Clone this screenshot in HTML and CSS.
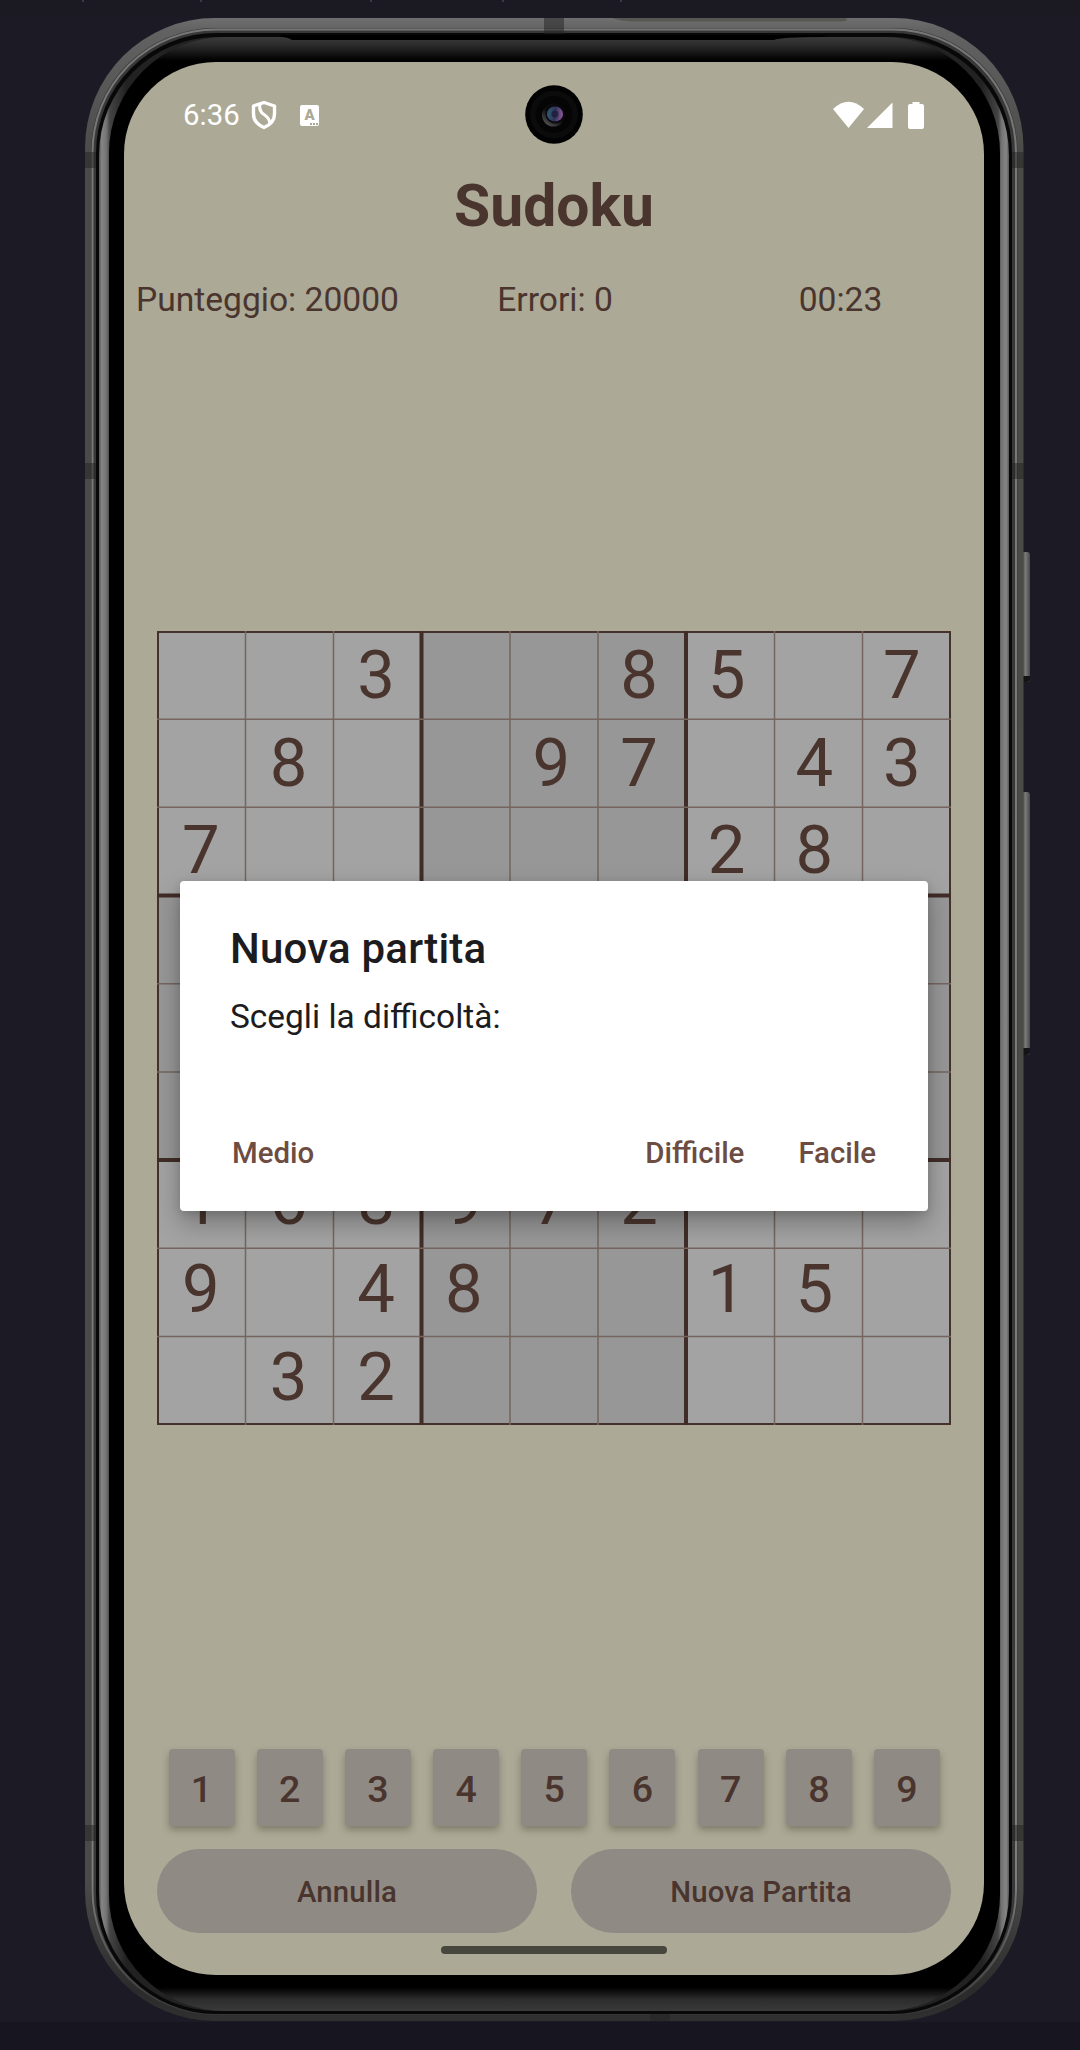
FILE: index.html
```html
<!DOCTYPE html>
<html lang="it">
<head>
<meta charset="utf-8">
<title>Sudoku</title>
<link rel="stylesheet" href="styles.css">
</head>
<body>
<svg class="device" width="1080" height="2050" viewBox="0 0 1080 2050">
  <defs>
    <linearGradient id="rim" gradientUnits="userSpaceOnUse" x1="0" y1="18" x2="0" y2="2021">
      <stop offset="0" stop-color="#6f6f6f"/><stop offset=".006" stop-color="#626262"/>
      <stop offset=".07" stop-color="#4a4b49"/><stop offset=".93" stop-color="#4a4b49"/>
      <stop offset=".985" stop-color="#2b2b2b"/><stop offset="1" stop-color="#303030"/>
    </linearGradient>
    <linearGradient id="line" gradientUnits="userSpaceOnUse" x1="0" y1="18" x2="0" y2="2021">
      <stop offset="0" stop-color="#777"/><stop offset=".93" stop-color="#7d7d7d"/><stop offset="1" stop-color="#333"/>
    </linearGradient>
    <linearGradient id="side" gradientUnits="userSpaceOnUse" x1="99" y1="0" x2="1009" y2="0">
      <stop offset="0" stop-color="#555"/><stop offset=".003" stop-color="#858585"/><stop offset=".008" stop-color="#747474"/><stop offset=".012" stop-color="#444"/><stop offset=".03" stop-color="#222"/>
      <stop offset=".97" stop-color="#222"/><stop offset=".988" stop-color="#444"/><stop offset=".992" stop-color="#747474"/><stop offset=".997" stop-color="#858585"/><stop offset="1" stop-color="#555"/>
    </linearGradient>
    <linearGradient id="bezel" gradientUnits="userSpaceOnUse" x1="0" y1="37" x2="0" y2="2011">
      <stop offset="0" stop-color="#3a3a3a"/><stop offset=".004" stop-color="#2c2c2c"/><stop offset=".012" stop-color="#000"/>
      <stop offset=".988" stop-color="#000"/><stop offset=".994" stop-color="#2c2c2c"/><stop offset="1" stop-color="#3a3a3a"/>
    </linearGradient>
    <linearGradient id="key" x1="0" y1="0" x2="1" y2="0">
      <stop offset="0" stop-color="#333"/><stop offset=".5" stop-color="#7a7a7a"/><stop offset="1" stop-color="#484848"/>
    </linearGradient>
  </defs>
  <rect width="1080" height="17" fill="#1b1a23"/>
  <rect y="2022" width="1080" height="28" fill="#171620"/>
  <path d="M83 0v2M201 0v2M371 0v2M503 0v2M621 0v2" stroke="#3a3852" stroke-width="2"/>
  <rect x="1021" y="552" width="9" height="130" rx="3" fill="url(#key)"/>
  <rect x="1021" y="792" width="9" height="263" rx="3" fill="url(#key)"/>
  <path d="M1023 676h7v3q0 3-4 3h-3zM1023 1048h7v3q0 4-4 4h-3z" fill="#141414"/>
  <rect x="85" y="18" width="938.5" height="2003" rx="130" fill="url(#rim)"/>
  <rect x="91" y="28" width="926.5" height="1987" rx="124" fill="#383838"/>
  <rect x="92.5" y="29.5" width="923.5" height="1984" rx="123" fill="none" stroke="url(#line)" stroke-width="2"/>
  <rect x="96" y="33" width="916" height="1981" rx="120" fill="#080808"/>
  <path d="M85 152h11v16H85zM1012 152h12v16h-12zM85 1825h11v16H85zM1012 1825h12v16h-12zM85 463h11v16H85zM1012 463h12v16h-12zM544 18h20v16h-20zM650 2014h20v7h-20z" fill="#222" opacity=".5"/>
  <path d="M612 18H845Q852 21 840 21.500H632Q620 21 612 18z" fill="#565653"/>
  <rect x="99" y="37" width="910" height="1974" rx="118" fill="url(#side)"/>
  <rect x="109" y="37" width="891" height="1974" rx="116" fill="url(#bezel)"/>
  <path d="M280 35H830L822 37Q780 37 774 40H292Q288 37 280 37z" fill="#000"/>
</svg>

<main class="screen">
  <header class="status">
    <span class="clock">6:36</span>
    <svg class="shield" width="26" height="30" viewBox="0 0 26 30" fill="none" stroke="#fff" stroke-width="3.400" stroke-linejoin="round">
      <path d="M13 2.500 23.500 6V14Q23.500 23 13 27.500 2.500 23 2.500 14V6z"/>
      <path d="M9 4Q7.500 11 13 14.500t6 9" stroke-width="3"/>
    </svg>
    <span class="badge"><b>A</b><i></i></span>
    <svg class="signals" width="92" height="28" viewBox="0 0 92 28" fill="#fff">
      <path d="M0 8Q15.500-6.500 31 8L15.500 27z"/><path d="M34 27 59.500 1.500V27z"/>
      <path d="M79.500 1h7v2H89q2 0 2 2v21q0 2-2 2H77q-2 0-2-2V5q0-2 2-2h2.500z"/>
    </svg>
    <svg class="camera" width="58" height="59" viewBox="0 0 58 59">
      <defs>
        <linearGradient id="lens" x1="0" y1=".4" x2="1" y2=".5"><stop offset="0" stop-color="#2d6075"/><stop offset=".5" stop-color="#2f3157"/><stop offset="1" stop-color="#8f5a9c"/></linearGradient>
        <linearGradient id="glint" x1="0" y1="1" x2=".6" y2=".2"><stop offset="0" stop-color="#666"/><stop offset=".7" stop-color="#0b0b0b"/></linearGradient>
      </defs>
      <ellipse cx="29" cy="29.500" rx="28.800" ry="29.300" fill="#020202"/>
      <circle cx="29" cy="29.500" r="24" fill="#0b0b0b"/><circle cx="29" cy="29.500" r="18.500" fill="#050505"/>
      <circle cx="28.500" cy="30" r="11.500" fill="url(#glint)"/><circle cx="30" cy="29" r="9.500" fill="#0a0a10"/>
      <ellipse cx="30" cy="29" rx="8" ry="7.500" fill="url(#lens)"/><circle cx="30" cy="29" r="3.500" fill="#1c1830" opacity=".7"/>
    </svg>
  </header>
  <h1 class="title">Sudoku</h1>
  <div class="stats"><span>Punteggio: 20000</span><span>Errori: 0</span><span>00:23</span></div>

  <section class="board">
    <svg class="rules" width="794" height="794" viewBox="0 0 794 794" fill="none">
      <path d="M0 0H794V794H0z" fill="#a3a3a3"/>
      <path d="M264.500 0H529V264.500H264.500zM0 264.500H264.500V529H0zM529 264.500H794V529H529zM264.500 529H529V794H264.500z" fill="#979797"/>
      <path d="M1 1H793V793H1z" stroke="#45322c" stroke-width="2"/>
      <path d="M264.500 0V794M529 0V794M0 264.500H794M0 529H794" stroke="#412d27" stroke-width="4"/>
      <path d="M88.500 0V794M176.500 0V794M353 0V794M441 0V794M617.500 0V794M705.500 0V794M0 88.300H794M0 176.300H794M0 352.700H794M0 441H794M0 617.300H794M0 705.500H794" stroke="#75655e" stroke-width="1.500"/>
    </svg>
    <div class="cells">
      <i></i><i></i><i>3</i><i></i><i></i><i>8</i><i>5</i><i></i><i>7</i>
      <i></i><i>8</i><i></i><i></i><i>9</i><i>7</i><i></i><i>4</i><i>3</i>
      <i>7</i><i></i><i></i><i></i><i></i><i></i><i>2</i><i>8</i><i></i>
      <i></i><i></i><i></i><i></i><i></i><i></i><i></i><i></i><i></i>
      <i></i><i></i><i></i><i></i><i></i><i></i><i></i><i></i><i></i>
      <i></i><i></i><i></i><i></i><i></i><i></i><i></i><i></i><i></i>
      <i>1</i><i>6</i><i>8</i><i>9</i><i>7</i><i>2</i><i></i><i></i><i></i>
      <i>9</i><i></i><i>4</i><i>8</i><i></i><i></i><i>1</i><i>5</i><i></i>
      <i></i><i>3</i><i>2</i><i></i><i></i><i></i><i></i><i></i><i></i>
    </div>
  </section>

  <nav class="keys"><b>1</b><b>2</b><b>3</b><b>4</b><b>5</b><b>6</b><b>7</b><b>8</b><b>9</b></nav>
  <div class="actions"><button>Annulla</button><button>Nuova Partita</button></div>
  <div class="home"></div>

  <section class="dialog">
    <h2>Nuova partita</h2>
    <p>Scegli la difficoltà:</p>
    <div class="choices"><span>Medio</span><span>Difficile</span><span>Facile</span></div>
  </section>
</main>
</body>
</html>
```
FILE: styles.css
```css
* { box-sizing: border-box; }
body {
  margin: 0;
  width: 1080px;
  height: 2050px;
  overflow: hidden;
  position: relative;
  background: #1c1b25;
  font-family: Roboto, sans-serif;
  color: #4a352e;
}
.device { position: absolute; left: 0; top: 0; }
.screen {
  position: relative;
  width: 860px;
  height: 1913px;
  margin: 62px 0 0 124px;
  border-radius: 92px;
  background: #aca996;
  display: flex;
  flex-direction: column;
}
.status {
  position: relative;
  height: 105px;
  padding-left: 59px;
  display: flex;
  align-items: center;
  color: #fff;
}
.clock { font-size: 29.4px; line-height: 34px; width: 68px; }
.shield { margin-top: 1px; }
.badge {
  width: 19px;
  height: 21px;
  margin-left: 23px;
  margin-top: 1px;
  border-radius: 2px;
  background: #fff;
  color: #aca996;
  position: relative;
  text-align: center;
}
.badge b { display: block; font-size: 15px; line-height: 20px; font-weight: 900; }
.badge i {
  position: absolute;
  right: 1px;
  bottom: 1px;
  width: 8px;
  height: 2px;
  background: repeating-linear-gradient(90deg, #aca996 0 2px, #fff 2px 3px);
}
.signals { margin-left: auto; margin-right: 59px; }
.camera { position: absolute; left: 401px; top: 23px; }
.title {
  margin: 3px 0 0;
  font-size: 58.8px;
  line-height: 71px;
  font-weight: 700;
  text-align: center;
}
.stats {
  margin-top: 39px;
  padding: 0 12px;
  height: 40px;
  display: grid;
  grid-template-columns: 262px 322px 1fr;
  font-size: 33.6px;
  line-height: 40px;
  white-space: nowrap;
}
.stats span:nth-child(2) { text-align: center; padding-right: 8px; }
.stats span:nth-child(3) { text-align: center; padding-right: 11px; }
.board {
  display: grid;
  width: 794px;
  height: 794px;
  margin: 311px 0 0 33px;
}
.rules, .cells { grid-area: 1 / 1; }
.cells {
  display: grid;
  grid-template: repeat(9, 87.7px) / repeat(9, 87.65px);
}
.cells i {
  font-style: normal;
  font-size: 67px;
  line-height: 88px;
  text-align: center;
}
.keys {
  margin: 324px 0 0 44.5px;
  display: flex;
  gap: 22.2px;
}
.keys b {
  width: 66px;
  height: 77px;
  border-radius: 4px;
  background: #908a85;
  box-shadow: 0 4px 7px rgba(60, 55, 40, .38);
  font-size: 37.6px;
  font-weight: 500;
  line-height: 80px;
  text-align: center;
}
.actions { display: flex; gap: 34px; margin: 23px 33px 0; }
.actions button {
  flex: 1;
  height: 84px;
  border: 0;
  border-radius: 42px;
  background: #908a85;
  color: inherit;
  font: 500 29.4px/82px Roboto, sans-serif;
  letter-spacing: .15px;
  padding: 2px 0 0;
}
.home {
  width: 226px;
  height: 8px;
  margin: 13px auto 0;
  border-radius: 4px;
  background: #47473d;
}
.dialog {
  position: absolute;
  left: 56px;
  top: 819px;
  width: 748px;
  height: 330px;
  padding: 43px 50px 0;
  border-radius: 4px;
  background: #fff;
  color: #1c1b20;
  box-shadow: 0 12px 26px rgba(0, 0, 0, .28), 0 2px 8px rgba(0, 0, 0, .12);
}
.dialog h2 { margin: 0; font-size: 42px; line-height: 50px; font-weight: 500; letter-spacing: .2px; }
.dialog p { margin: 23px 0 0; font-size: 33.45px; line-height: 40px; }
.choices {
  margin-top: 98px;
  padding: 0 2px 0 2px;
  display: flex;
  font-size: 29.4px;
  line-height: 36px;
  font-weight: 500;
  color: #6d4c41;
}
.choices span:first-child { margin-right: auto; }
.choices span:last-child { margin-left: 54px; }
```
